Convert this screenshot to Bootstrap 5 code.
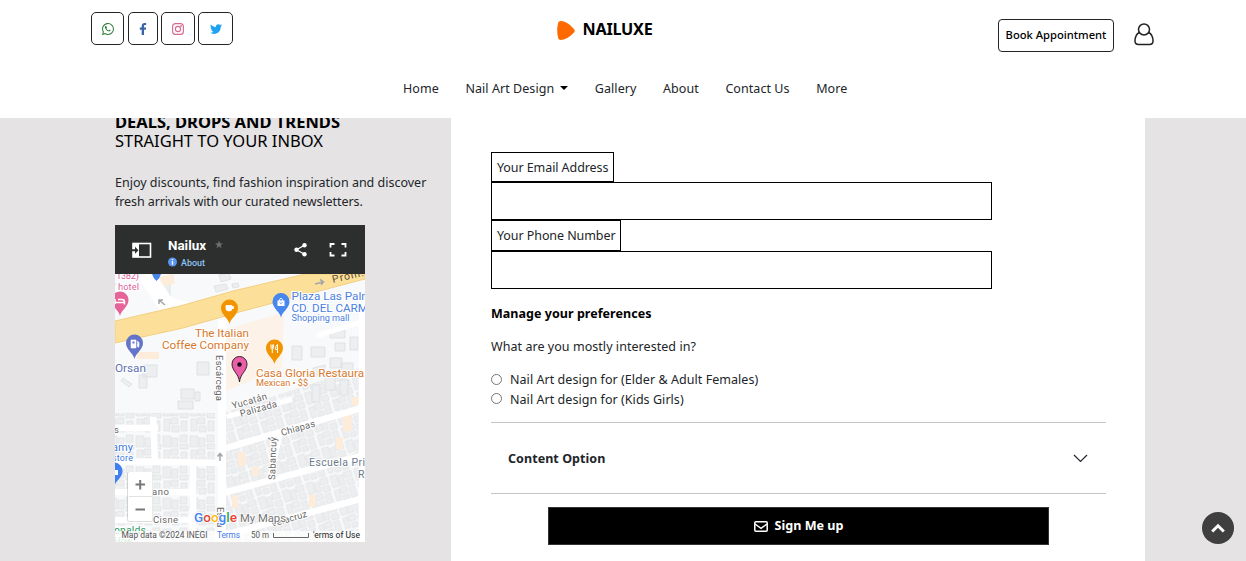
<!DOCTYPE html>
<html lang="en">
<head>
<meta charset="utf-8">
<meta name="viewport" content="width=device-width, initial-scale=1">
<title>Nailuxe</title>
<link href="https://cdn.jsdelivr.net/npm/bootstrap@5.3.0/dist/css/bootstrap.min.css" rel="stylesheet">
<style>
body{font-family:"Noto Sans","Open Sans",sans-serif;font-size:12.5px;line-height:20px;color:#212529;background:#e5e3e4;height:561px;overflow:hidden}
.site-head{height:118px}
.topbar{height:62px;padding:12px 92px 0 91px}
.social{height:33px;border:1px solid #212529;border-radius:5px;background:#fff;padding:0}
.brand-name{font-size:16.2px;font-weight:700;color:#000;letter-spacing:-.25px}
.brand-wrap{margin:4px 22px 0 0;height:26px}
.book{height:33px;width:116px;border:1px solid #212529;border-radius:4px;font-size:11.2px;font-weight:500;color:#000;padding:0;margin-top:7px;white-space:nowrap}
.menu{gap:26.6px;padding:17px 0 0 403px}
.menu a{color:#212529;text-decoration:none;white-space:nowrap;letter-spacing:.06px}
.menu .dropdown-toggle::after{margin-left:6px;vertical-align:3px;border-top-width:4px;border-left-width:4px;border-right-width:4px;color:#000}
.page{padding-top:112px;height:561px}
.side{width:451px;padding-left:115px}
.side h1{font-size:16.5px;line-height:19px;color:#000;font-weight:400;margin:0 0 23px;white-space:nowrap}
.side p{line-height:19px;margin:0 0 14px;white-space:nowrap}
.map-box{width:250px;height:317px}
.map-head{height:49px;background:#2d2f2e;font-family:Roboto,sans-serif}
.panel{width:694px;background:#fff;margin-top:6px;padding:34px 39px 0 40px}
.field-label{border:1px solid #000;height:30px;line-height:29px;padding:0 5px;white-space:nowrap;letter-spacing:-.08px}
.field-label.tall{height:31px;line-height:30px}
.field{border:1px solid #000;border-radius:0;width:501px;height:38px;padding:0 8px;display:block}
.pick{height:19.5px;gap:8px;line-height:19px;letter-spacing:.05px}
.pick input{appearance:none;width:11px;height:11px;border:1px solid #767676;border-radius:50%;margin:0 0 1px}
.option-row{height:72px;margin-top:13px;border-top:1px solid #c4c4c4;border-bottom:1px solid #c4c4c4;padding:2px 18px 0 17px;font-weight:700;letter-spacing:.06px}
.sign{width:501px;height:38px;margin:13px 0 0 57px;background:#000;color:#fff;border-radius:0;border:1px solid #333;font-size:12.6px;font-weight:700;padding:0}
.to-top{width:32px;height:32px;right:12px;bottom:17px;background:#3f3f40;border:0;padding:0}
</style>
</head>
<body>
<header class="site-head fixed-top bg-white">
  <div class="topbar d-flex justify-content-between align-items-start">
    <div class="d-flex">
      <button class="social d-flex align-items-center justify-content-center" style="width:33px;margin-right:4px" aria-label="WhatsApp"><svg width="12" height="12" viewBox="0 0 16 16" fill="#2c7a35"><path d="M13.6 2.33A7.85 7.85 0 0 0 8 0C3.63 0 .07 3.56.06 7.93c0 1.4.37 2.76 1.06 3.96L0 16l4.2-1.1a7.93 7.93 0 0 0 3.79.96c4.37 0 7.93-3.56 7.93-7.93A7.9 7.9 0 0 0 13.6 2.33M8 14.52a6.6 6.6 0 0 1-3.36-.92l-.24-.14-2.5.65.67-2.43-.16-.25A6.6 6.6 0 0 1 8 1.34a6.56 6.56 0 0 1 4.66 1.93 6.56 6.56 0 0 1 1.93 4.66c0 3.64-2.97 6.59-6.59 6.59m3.61-4.93c-.2-.1-1.17-.58-1.35-.65-.18-.06-.31-.1-.44.1-.13.2-.51.65-.62.78-.12.13-.23.15-.43.05-.2-.1-.84-.31-1.59-.98-.59-.53-.98-1.18-1.1-1.38-.11-.2-.01-.3.09-.4.38-.43.56-.67.3-1.1-.05-.1-.44-1.08-.61-1.47-.25-.6-.48-.4-.99-.42-.49.09-1.02.66-1.02 1.66s.71 1.93.81 2.06c1.02 1.62 2.42 2.65 3.76 3.06 1.35.42 2.61-.05 2.83-.66.16-.47.16-.86.11-.94-.05-.08-.18-.13-.38-.23"/></svg></button>
      <button class="social d-flex align-items-center justify-content-center" style="width:30px;margin-right:3px" aria-label="Facebook"><svg width="8" height="12" viewBox="0 0 320 512" fill="#3b63a8"><path d="M279 288l14-93h-89v-60c0-25 12-50 52-50h41V7s-37-7-72-7c-73 0-121 45-121 125v70H23v93h81v224h100V288z"/></svg></button>
      <button class="social d-flex align-items-center justify-content-center" style="width:34px;margin-right:3px" aria-label="Instagram"><svg width="12" height="12" viewBox="0 0 12 12" fill="none" stroke="#d8688c" stroke-width="1.1"><rect x=".6" y=".6" width="10.8" height="10.8" rx="3"/><circle cx="6" cy="6" r="2.6"/><circle cx="9.1" cy="2.9" r=".35"/></svg></button>
      <button class="social d-flex align-items-center justify-content-center" style="width:35px" aria-label="Twitter"><svg width="12" height="12" viewBox="0 0 512 512" fill="#1da1f2"><path d="M459 152c.3 4.500.3 9 .3 13.600C459.300 304 354 464 161 464 102 464 47 447 0 417c8 1 16 1.300 25 1.300 49 0 94-17 130-45-46-1-85-31-98-73 6.500 1 13 1.600 20 1.600 9.500 0 19-1.300 28-3.600-48-10-84-52-84-103v-1.300c14 8 30 13 47 13.600-28-19-47-51-47-87 0-20 5-37 14-53 52 64 129 105 217 110-1.600-8-2.600-16-2.600-24 0-58 47-105 105-105 30 0 58 13 77 33 24-5 46-13 67-25-8 24-24 45-46 58 21-2 42-8 60-16-14 21-32 39-53 54z"/></svg></button>
    </div>
    <a class="brand-wrap d-flex align-items-center text-decoration-none" href="#"><svg width="18" height="19" viewBox="0 0 18 19" style="margin-top:3px"><path d="M1 3Q1 0 4 0Q10 0 16.500 7.500Q19 10 16.500 12Q11 18 4 19Q1 19 1 16Q-.6 9 1 3Z" fill="#ff6a00"/></svg><span class="brand-name" style="margin-left:8px">NAILUXE</span></a>
    <div class="d-flex">
      <button class="book btn bg-white">Book Appointment</button>
      <svg style="margin:11px 0 0 20px" width="20" height="23" viewBox="0 0 20 23" fill="none" stroke="#222" stroke-width="1.500"><circle cx="10" cy="6.500" r="5.500"/><path d="M5.200 9.500Q1 12 1 18Q1 21.500 4.500 21.500H15.500Q19 21.500 19 18Q19 12 14.800 9.500"/></svg>
    </div>
  </div>
  <nav class="menu d-flex">
    <a href="#">Home</a><a href="#" class="dropdown-toggle">Nail Art Design</a><a href="#">Gallery</a><a href="#">About</a><a href="#">Contact Us</a><a href="#">More</a>
  </nav>
</header>

<main class="page d-flex">
  <aside class="side flex-shrink-0">
    <h1><span class="fw-bold">DEALS, DROPS AND TRENDS</span><br><span>STRAIGHT TO YOUR INBOX</span></h1>
    <p>Enjoy discounts, find fashion inspiration and discover<br><span style="letter-spacing:-.08px">fresh arrivals with our curated newsletters.</span></p>
    <div class="map-box">
      <div class="map-head">
        <svg width="250" height="49" viewBox="0 0 250 49" class="d-block">
          <rect x="18" y="18.500" width="17.500" height="13.500" fill="none" stroke="#fff" stroke-width="1.600"/>
          <rect x="18" y="18" width="6" height="14" fill="#fff"/><path d="M17 24.300h3v-2.500l3.500 3.500-3.500 3.500v-2.500h-3z" fill="#2d2f2e"/>
          <text x="53" y="25" fill="#fff" font-size="13" font-weight="700" textLength="38" lengthAdjust="spacingAndGlyphs">Nailux</text>
          <path d="M104 15.500l1.100 2.700 2.900.2-2.200 1.900.7 2.900-2.500-1.600-2.500 1.600.7-2.900-2.200-1.900 2.900-.2z" fill="#6a6c6b"/>
          <circle cx="57.500" cy="37" r="4.500" fill="#5a94ee"/><path d="M57.500 34v1.200M57.500 36.200v3.600" stroke="#fff" stroke-width="1.400"/>
          <text x="66" y="40.500" fill="#8fc1f5" font-size="9" font-weight="500" textLength="24" lengthAdjust="spacingAndGlyphs">About</text>
          <g fill="#fff"><circle cx="181.500" cy="24.700" r="2.200"/><circle cx="189.500" cy="20.200" r="2.200"/><circle cx="189.500" cy="29.200" r="2.200"/></g><path d="M189.500 20.200L181.500 24.700L189.500 29.200" stroke="#fff" stroke-width="1.300" fill="none"/>
          <path d="M215.500 22.500V19H219.500M226.500 19H230.500V22.500M230.500 27V30.500H226.500M219.500 30.500H215.500V27" stroke="#fff" stroke-width="1.800" fill="none"/>
        </svg>
      </div>
      <svg class="d-block" width="250" height="268" viewBox="115 274 250 268" font-family="Roboto,sans-serif">
        <defs>
          <pattern id="lots" width="27" height="31" patternUnits="userSpaceOnUse"><g fill="#edeef0" stroke="#dfe1e4" stroke-width=".7"><path d="M1 2h8v11h-8zM10 4h6v9h-6zM18 1h7v7h-7zM18 10h8v5h-8zM2 16h6v12h-6zM9 15h7v6h-7zM10 23h7v6h-7zM19 18h6v10h-6z"/></g></pattern>
          <pattern id="lotsTilt" width="25" height="29" patternUnits="userSpaceOnUse" patternTransform="rotate(-17)"><g fill="#edeef0" stroke="#dfe1e4" stroke-width=".7"><path d="M1 1h7v12h-7zM9 3h5v10h-5zM15 1h8v6h-8zM16 9h7v6h-7zM1 16h5v11h-5zM7 15h7v6h-7zM8 23h6v5h-6zM16 17h6v11h-6z"/></g></pattern>
          <path id="pin" d="M0 15C-1 9-8.500 6-8.500-1A8.500 8.500 0 0 1 8.500-1C8.500 6 1 9 0 15Z"/>
        </defs>
        <rect x="115" y="274" width="250" height="268" fill="#f8f9fb"/>
        <path d="M225 330L284 312L282 368L224 392Z" fill="#fdf2e7"/>
        <path d="M115 413H215V542H115z" fill="url(#lots)"/>
        <path d="M226 412L365 366V542H226z" fill="url(#lotsTilt)"/>
        <g fill="#eceef0" stroke="#dcdee1" stroke-width=".8"><path d="M181 389h13v10h-13zM195 392h5v9h-5zM178 401h15v8h-15zM197 362h12v13h-12zM143 365h14v12h-14zM139 375h8v13h-8zM123 378l9 6-3 3-8-6zM292 346h10v14h-10zM311 347h14v10h-14zM330 330h15v8h-15zM219 275l10-2 2 6-10 3zM214 286l12-2 2 5-12 3zM232 284l6-1 1 4-6 1zM313 368l12-3v10h-12zM335 343h10v8h-10zM350 337h8v13h-8zM330 358h12v10h-12zM160 284h10v12h-10zM312 385h8v17h-8zM325 375h10v15h-10zM341 363h12v10h-12zM340 380h8v15h-8z"/></g>
        <g fill="#fcecd9"><path d="M137 352h22v7h-22zM159 277l14-3 2 9-14 5zM238 452h8v14h-8zM252 467h7v9h-7zM336 437h7v12h-7zM232 495h6v13h-6zM309 495h7v12h-7zM343 415h9v16h-9zM352 397h8v8h-8z"/></g>
        <g stroke="#fff" stroke-width="6.500" fill="none" stroke-linejoin="round">
          <path d="M222 320V542" stroke-width="8"/><path d="M223 449L365 407M223 493L365 455M228 534L365 498"/><path d="M229 416L290 400M319 335L365 321" stroke-linecap="round" stroke-width="5"/><path d="M281 432L269 480" stroke-width="5"/><path d="M115 428H158M153 417L155 461M115 461L222 463M193 463V542M115 492H193M115 520H193M362 300V542"/><path d="M146 274L168 308" stroke-width="17"/><path d="M168 300L200 309"/>
        </g>
        <path d="M115 321L180 306L233 291L305 274H365V279L243 311L183 328L115 343Z" fill="#fce09a" stroke="#f3cf82" stroke-width="1"/>
        <g stroke="#a2a6aa" stroke-width="1.500" fill="none"><path d="M315 284l8-2m-3-2.500l3.500 2.300-2.500 3M165 305l-6-5m0 4v-4h4M220 461v-7m-2.500 2.500l2.500-3 2.500 3M268 438l7 3-4-4"/></g>
        <g font-size="10.500" stroke="#fff" stroke-width="2" paint-order="stroke" stroke-linejoin="round">
          <g fill="#e0609a"><text x="116" y="279" font-size="9.500" textLength="23">1382)</text><text x="114" y="290" font-size="9.500" textLength="25">' hotel</text></g>
          <g fill="#4b80df"><text x="291.500" y="300" font-size="11.500" textLength="80" lengthAdjust="spacingAndGlyphs">Plaza Las Palm</text><text x="291.500" y="312" font-size="11.500" textLength="83" lengthAdjust="spacingAndGlyphs">CD. DEL CARME</text><text x="291.500" y="321" font-size="8.800" textLength="58" lengthAdjust="spacingAndGlyphs">Shopping mall</text></g>
          <g fill="#d7782d"><text x="195" y="337" textLength="54" lengthAdjust="spacingAndGlyphs">The Italian</text><text x="162" y="349" textLength="87" lengthAdjust="spacingAndGlyphs">Coffee Company</text><text x="256" y="377" textLength="108" lengthAdjust="spacingAndGlyphs">Casa Gloria Restaura</text><text x="256" y="386" font-size="8.800" textLength="52" lengthAdjust="spacingAndGlyphs">Mexican • $$</text></g>
          <text x="115" y="372" fill="#6172b3" textLength="31" lengthAdjust="spacingAndGlyphs">Orsan</text>
          <g fill="#666"><text transform="translate(216 355) rotate(90)" font-size="9.500" textLength="46">Escárcega</text><text transform="translate(233 409) rotate(-16)" font-size="9.500" textLength="36">Yucatán</text><text transform="translate(241 417) rotate(-16)" font-size="9.500" textLength="38">Palizada</text><text transform="translate(282 436) rotate(-16)" font-size="9.500" textLength="35">Chiapas</text><text transform="translate(275 480) rotate(-88)" font-size="9.500" textLength="43">Sabancuy</text><text transform="translate(272 527) rotate(-16)" font-size="9.500" textLength="37">Veracruz</text><text transform="translate(217 507) rotate(90)" font-size="9.500">Esca</text><text x="152" y="495" font-size="9.500" textLength="17">ano</text><text x="153" y="523" font-size="9.500" textLength="25">Cisne</text><text x="114" y="433" font-size="9.500">s</text></g>
          <g fill="#6a7b8d"><text x="309" y="466" textLength="56">Escuela Pri</text><text x="358" y="478">R</text></g>
          <g fill="#4179df"><text x="112" y="451" font-size="11" textLength="21">amy</text><text x="112" y="461" font-size="9" textLength="21">store</text></g>
          <g fill="#329a62"><text x="114" y="534" textLength="32">onalds</text><text x="114" y="544" font-size="9">How</text></g>
          <text transform="translate(333 283) rotate(-13)" fill="#5c4c33" stroke="#fce09a" textLength="32">Prom.</text>
        </g>
        <path d="M152 274h9q-1 4-4.500 7q-3.500-3-4.500-7" fill="#4785e8"/>
        <use href="#pin" x="120" y="301" fill="#e66399"/><path d="M115 299v5M115 302.500h9.500v2M118 299.500h4q2.500 0 2.500 2.500" stroke="#fff" stroke-width="1.500" fill="none"/>
        <use href="#pin" x="229.500" y="309" fill="#f19400"/><path d="M226 305.500h6v3q0 2.500-3 2.500t-3-2.500zM232 306.500h1.500v2h-1.500" fill="#fff" stroke="#fff" stroke-width=".8"/>
        <use href="#pin" x="281" y="302.500" fill="#4887ed"/><path d="M277.500 300.500h7v5.500h-7z" fill="#fff"/><path d="M279.500 301v-1.500q1.500-2.500 3 0v1.500" stroke="#fff" fill="none"/><path d="M279.500 302.500q1.500 2 3 0" stroke="#4887ed" fill="none" stroke-width=".8"/>
        <use href="#pin" x="134.500" y="344" fill="#6474c9"/><path d="M131 340h5v8h-5zM137 341l2 1.500v4q-1 1.500-1.500 0V344" fill="#fff" stroke="#fff" stroke-width=".6"/><path d="M132.500 341.500h2v2h-2z" fill="#6474c9"/>
        <use href="#pin" x="274.500" y="349" fill="#f19400"/><path d="M271 344.500v3q0 1.500 1.300 1.500v4M273.500 344.500v3q0 1.500-1.200 1.500M272.300 344.500v4M277.500 353v-8.500q-2 1-2 5h2" stroke="#fff" stroke-width="1" fill="none"/>
        <path d="M239.500 382C239 374 232 371 232 364A7.500 7.500 0 0 1 247 364C247 371 240 374 239.500 382Z" fill="#ea5fa8" stroke="#37202c" stroke-width="1"/><circle cx="239.500" cy="364.500" r="2.200" fill="#111"/>
        <use href="#pin" x="114" y="472" fill="#3f7ff0"/><path d="M115 470h3v5h-3" fill="#fff"/>
        <rect x="115" y="531" width="250" height="11" fill="#fff" opacity=".78"/>
        <rect x="127" y="472" width="26" height="50" fill="#777" opacity=".25" rx="2"/><rect x="128" y="472" width="24.500" height="49" fill="#fff" rx="1.500"/><path d="M129 496.500h23" stroke="#e2e2e2"/><path d="M135.500 484.500h9.500M140.200 480v9.500M135.500 509.500h9.500" stroke="#777" stroke-width="2"/>
        <g font-size="13" font-weight="500" stroke="#fff" stroke-width="1.500" paint-order="stroke"><text x="194" y="522" textLength="43" lengthAdjust="spacingAndGlyphs"><tspan fill="#4285f4">G</tspan><tspan fill="#ea4335">o</tspan><tspan fill="#fbbc05">o</tspan><tspan fill="#4285f4">g</tspan><tspan fill="#34a853">l</tspan><tspan fill="#ea4335">e</tspan></text><text x="240" y="522" font-size="11.500" font-weight="400" fill="#757575" textLength="46" lengthAdjust="spacingAndGlyphs">My Maps</text></g>
        <g font-size="8.500" fill="#555"><text x="121.500" y="538" textLength="86" lengthAdjust="spacingAndGlyphs">Map data ©2024 INEGI</text><text x="217" y="538" fill="#3f79e8" textLength="23" lengthAdjust="spacingAndGlyphs">Terms</text><text x="251" y="538" textLength="18" lengthAdjust="spacingAndGlyphs">50 m</text><text x="313" y="538" fill="#222" textLength="47" lengthAdjust="spacingAndGlyphs">'erms of Use</text></g>
        <path d="M273.500 533v4.500h35V533" stroke="#666" fill="none"/>
      </svg>
    </div>
  </aside>

  <section class="panel flex-shrink-0">
    <form>
      <div class="d-flex"><label class="field-label" for="em">Your Email Address</label></div>
      <input class="field" id="em" type="email">
      <div class="d-flex"><label class="field-label tall" for="ph">Your Phone Number</label></div>
      <input class="field" id="ph" type="tel">
      <div class="fw-bold text-black" style="margin-top:15px;letter-spacing:.04px">Manage your preferences</div>
      <div style="margin:13px 0;letter-spacing:.05px">What are you mostly interested in?</div>
      <label class="pick d-flex align-items-center"><input type="radio" name="who"><span>Nail Art design for (Elder &amp; Adult Females)</span></label>
      <label class="pick d-flex align-items-center"><input type="radio" name="who"><span>Nail Art design for (Kids Girls)</span></label>
      <div class="option-row d-flex align-items-center justify-content-between"><span>Content Option</span><svg width="15" height="9" viewBox="0 0 15 9" fill="none" stroke="#212529" stroke-width="1.200" style="margin-bottom:2px"><path d="M1 1l6.500 6.500L14 1"/></svg></div>
      <button type="button" class="sign btn d-flex align-items-center justify-content-center"><svg width="14" height="11" viewBox="0 0 14 11" fill="none" stroke="#fff" stroke-width="1.500"><rect x=".8" y=".8" width="12.400" height="9.400" rx="1"/><path d="M1 3l6 4.300L13 3"/></svg><span style="margin-left:7px">Sign Me up</span></button>
    </form>
  </section>
</main>
<button class="to-top position-fixed rounded-circle d-flex align-items-center justify-content-center" aria-label="Back to top"><svg width="14" height="10" viewBox="0 0 14 10" fill="none" stroke="#fff" stroke-width="3"><path d="M1.200 8.500L7 2.800L12.800 8.500"/></svg></button>
<script src="https://cdn.jsdelivr.net/npm/bootstrap@5.3.0/dist/js/bootstrap.bundle.min.js"></script>
</body>
</html>
